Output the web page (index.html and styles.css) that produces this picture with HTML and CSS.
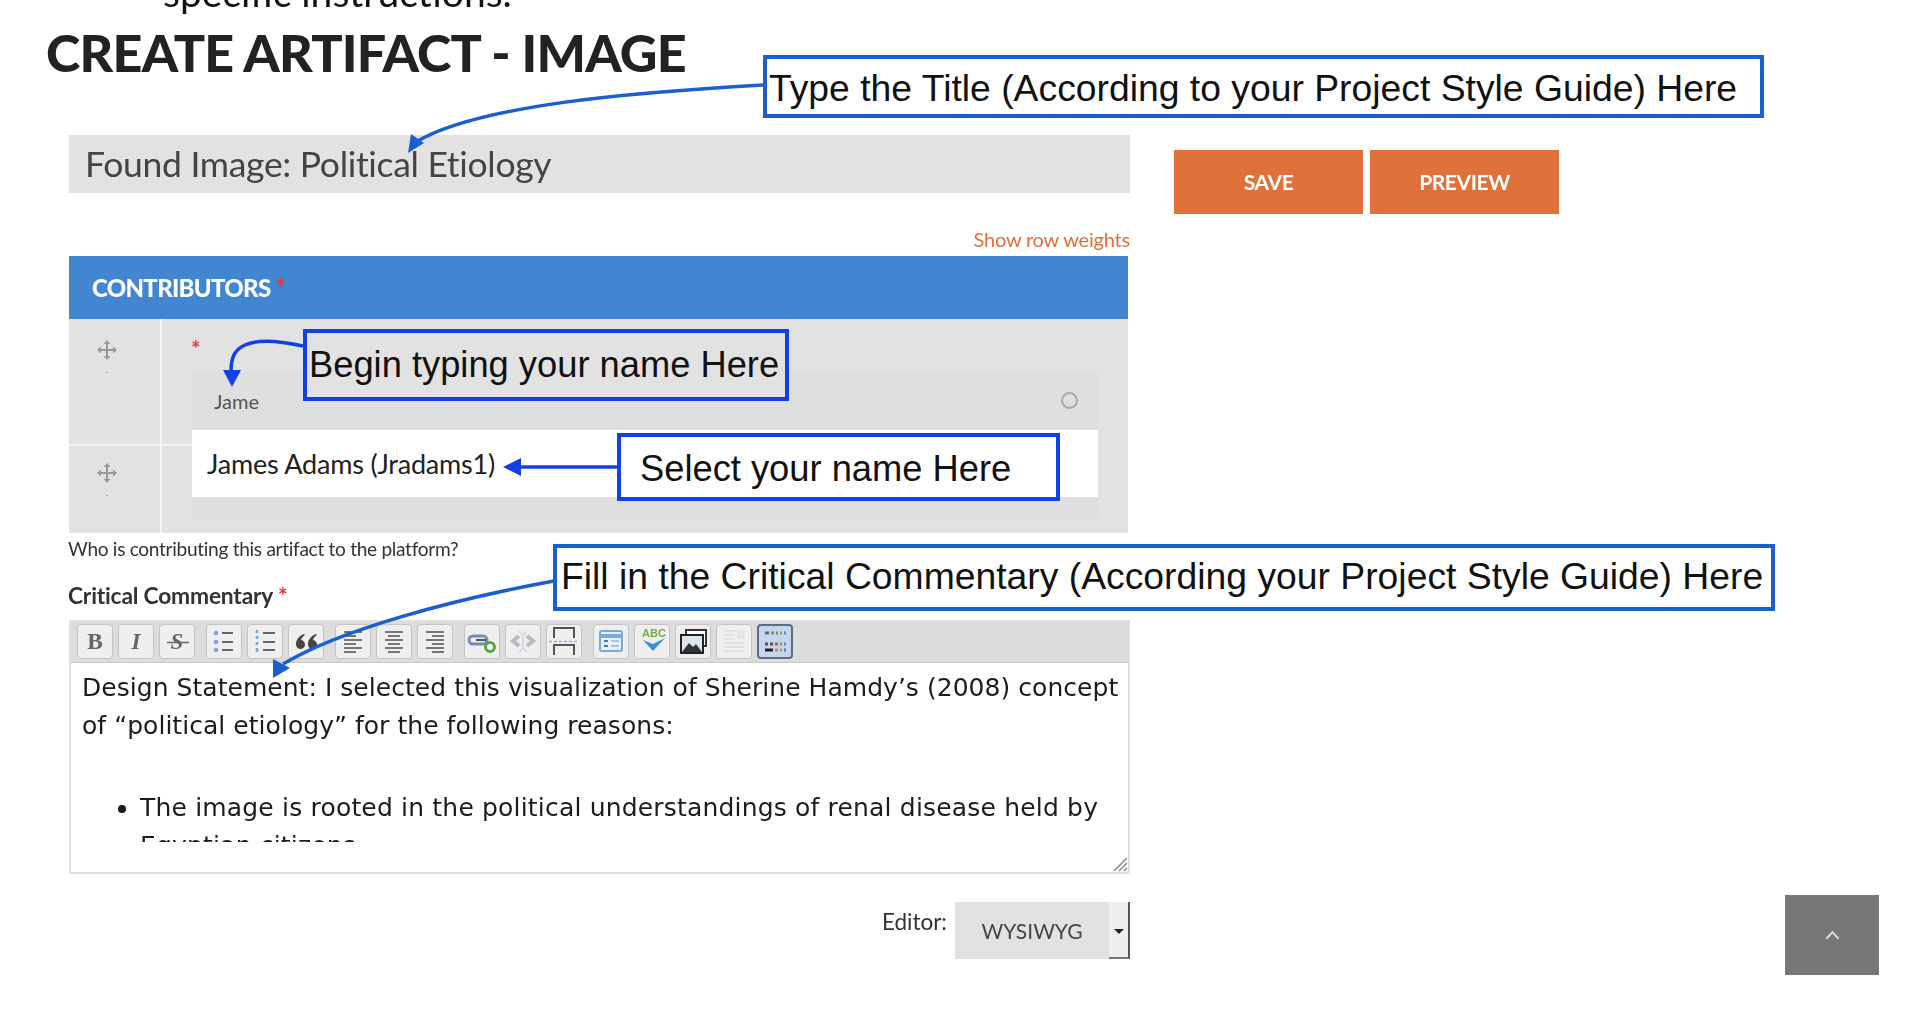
FILE: index.html
```
<!DOCTYPE html>
<html lang="en">
<head>
<meta charset="utf-8">
<title>Create Artifact - Image</title>
<link rel="stylesheet" href="styles.css">
</head>
<body>
<main class="page">
  <p class="clip-line">specific instructions.</p>
  <h1 class="page-title">CREATE ARTIFACT - IMAGE</h1>

  <div class="layout">
    <section class="form-col">
      <div class="title-field">Found Image: Political Etiology</div>
      <div class="weights"><a class="weights-link">Show row weights</a></div>

      <div class="panel-head">CONTRIBUTORS <span class="req">*</span></div>
      <div class="panel-body">
        <div class="drag-col">
          <div class="drag-cell">
            <svg class="move" viewBox="0 0 20 20"><use href="#i-move"/></svg>
            <i class="tick"></i>
          </div>
          <div class="drag-cell">
            <svg class="move" viewBox="0 0 20 20"><use href="#i-move"/></svg>
            <i class="tick"></i>
          </div>
        </div>
        <div class="field-col">
          <div class="row-line"></div>
          <span class="field-req">*</span>
          <div class="combo">
            <div class="combo-input"><span>Jame</span><i class="radio"></i></div>
            <div class="combo-option">James Adams (Jradams1)</div>
          </div>
        </div>
      </div>
      <p class="help">Who is contributing this artifact to the platform?</p>

      <h2 class="field-label">Critical Commentary <span class="req">*</span></h2>
      <div class="editor">
        <div class="toolbar">
          <div class="tool-group">
            <button class="tool"><span class="t-b">B</span></button>
            <button class="tool"><span class="t-i">I</span></button>
            <button class="tool"><span class="t-s">S</span><svg class="strike" viewBox="0 0 36 35"><path d="M7 17.500h22" stroke="#666" stroke-width="1.500"/></svg></button>
          </div>
          <div class="tool-group">
            <button class="tool"><svg viewBox="0 0 36 35"><g fill="#7ba7dc"><circle cx="10" cy="9" r="2.300"/><circle cx="10" cy="18" r="2.300"/><circle cx="10" cy="26" r="2.300"/></g><path d="M16 9h11M16 18h11M16 26h11" stroke="#666" stroke-width="2"/></svg></button>
            <button class="tool"><svg viewBox="0 0 36 35"><path d="M10 6v3M10 12v3M10 18v3M10 24v4" stroke="#7ba7dc" stroke-width="2.600"/><path d="M16 9h12M16 18h12M16 26h12" stroke="#666" stroke-width="2"/></svg></button>
            <button class="tool"><svg viewBox="0 0 36 35"><path d="M16 10c-5 2-8 6-8 10a4.500 4.500 0 1 0 5-4c.5-2 2-4 4-5zM28 10c-5 2-8 6-8 10a4.500 4.500 0 1 0 5-4c.5-2 2-4 4-5z" fill="#444"/></svg></button>
          </div>
          <div class="tool-group">
            <button class="tool"><svg viewBox="0 0 36 35"><path d="M9 8h18M9 12h12M9 16h18M9 20h12M9 24h18M9 28h12" stroke="#777" stroke-width="2"/></svg></button>
            <button class="tool"><svg viewBox="0 0 36 35"><path d="M9 8h18M12 12h12M9 16h18M12 20h12M9 24h18M12 28h12" stroke="#777" stroke-width="2"/></svg></button>
            <button class="tool"><svg viewBox="0 0 36 35"><path d="M9 8h18M15 12h12M9 16h18M15 20h12M9 24h18M15 28h12" stroke="#777" stroke-width="2"/></svg></button>
          </div>
          <div class="tool-group">
            <button class="tool"><svg viewBox="0 0 36 35"><path d="M9 12h10a4 4 0 0 1 0 8H9a4 4 0 0 1 0-8z" fill="none" stroke="#6d8fb8" stroke-width="3"/><path d="M12 16h10" stroke="#555" stroke-width="2"/><circle cx="26" cy="23" r="4.500" fill="#fff" stroke="#5ba33b" stroke-width="3"/></svg></button>
            <button class="tool"><svg viewBox="0 0 36 35"><path d="M14 12l-6 5 6 5M22 12l6 5-6 5" fill="none" stroke="#bbb" stroke-width="4"/><path d="M14 7l4 4 4-4M14 28l4-4 4 4M18 11v14" fill="none" stroke="#c9d8ea" stroke-width="1.500"/></svg></button>
            <button class="tool"><svg viewBox="0 0 36 35"><path d="M8 14V4h20v10M8 31V21h20v10" fill="none" stroke="#555" stroke-width="2"/><path d="M3 17.500h30" stroke="#8db0dc" stroke-width="1.500" stroke-dasharray="3 2"/></svg></button>
          </div>
          <div class="tool-group">
            <button class="tool"><svg viewBox="0 0 36 35"><rect x="7" y="7" width="22" height="20" rx="2" fill="#e8f0fa" stroke="#7ba7dc" stroke-width="2"/><path d="M7 12h22" stroke="#7ba7dc" stroke-width="4"/><path d="M11 17h4M11 22h4" stroke="#4a78b5" stroke-width="2"/><path d="M18 17h8M18 22h8" stroke="#a8c4e6" stroke-width="2"/></svg></button>
            <button class="tool"><span class="t-abc">ABC</span><svg class="check" viewBox="0 0 36 35"><path d="M8 15l10 11 12-13-12 6z" fill="#3f8fdc"/></svg></button>
            <button class="tool"><svg viewBox="0 0 36 35"><rect x="11" y="6" width="20" height="16" fill="#fff" stroke="#333" stroke-width="2"/><rect x="6" y="11" width="22" height="18" fill="#dde6ef" stroke="#222" stroke-width="2"/><path d="M7 28l7-9 4 4 3-3 6 8z" fill="#333"/></svg></button>
            <button class="tool"><svg viewBox="0 0 36 35"><path d="M8 7h11M8 11h11M8 15h11M8 19h20M8 23h20M8 27h20" stroke="#ddd" stroke-width="1.600"/><rect x="21" y="6" width="8" height="9" fill="#e4e4e4"/></svg></button>
            <button class="tool tool-on"><svg viewBox="0 0 36 35"><path d="M8 9h4" stroke="#666" stroke-width="3"/><path d="M14 9h3" stroke="#888" stroke-width="3"/><path d="M19 9h2" stroke="#6a9e4a" stroke-width="3"/><path d="M23 9h2" stroke="#d08a3a" stroke-width="3"/><path d="M27 9h2" stroke="#3f8fdc" stroke-width="3"/><path d="M8 20h3M13 20h3" stroke="#555" stroke-width="3"/><path d="M18 20h3" stroke="#c25a4a" stroke-width="3"/><path d="M23 20h2" stroke="#6a9e4a" stroke-width="3"/><path d="M27 20h2" stroke="#3f8fdc" stroke-width="3"/><path d="M8 26h8" stroke="#222" stroke-width="3"/><path d="M18 26h3M23 26h2" stroke="#d08a3a" stroke-width="3"/><path d="M27 26h2" stroke="#777" stroke-width="3"/></svg></button>
          </div>
        </div>
        <div class="editor-body">
          <div class="editor-clip">
            <p class="editor-p">Design Statement: I selected this visualization of Sherine Hamdy’s (2008) concept of “political etiology” for the following reasons:</p>
            <ul class="editor-list">
              <li>The image is rooted in the political understandings of renal disease held by Egyptian citizens</li>
            </ul>
          </div>
          <svg class="grip" viewBox="0 0 16 16"><path d="M2 15L15 2M7 15l8-8M12 15l3-3" stroke="#888" stroke-width="1.500"/></svg>
        </div>
      </div>

      <div class="editor-switch">
        <span class="switch-label">Editor:</span>
        <div class="select"><span class="select-value">WYSIWYG</span><span class="select-arrow"></span></div>
      </div>
    </section>

    <aside class="actions">
      <button class="btn">SAVE</button>
      <button class="btn">PREVIEW</button>
    </aside>
  </div>

  <svg class="arrows" viewBox="0 0 1908 1010" aria-hidden="true">
    <defs>
      <g id="i-move" fill="none" stroke="#999" stroke-width="2"><path d="M10 3v14M3 10h14"/><path d="M10 0l-3.500 4h7zM10 20l-3.500-4h7zM0 10l4-3.500v7zM20 10l-4-3.500v7z" fill="#999" stroke="none"/></g>
    </defs>
    <path class="a-dark" d="M763 85C640 92 480 104 416 142"/>
    <polygon class="f-dark" points="408,153 411,134 424,143"/>
    <path class="a-bright" d="M303 346C280 341 258 339 245 345C234 350 231 358 231 372"/>
    <polygon class="f-bright" points="232,387 223,370 241,370"/>
    <path class="a-bright" d="M617 467H518"/>
    <polygon class="f-bright" points="503,467 521,458 521,476"/>
    <path class="a-dark" d="M554 581C450 600 340 630 283 664"/>
    <polygon class="f-dark" points="273,678 273,659 290,668"/>
  </svg>

  <div class="callout c-title">Type the Title (According to your Project Style Guide) Here</div>
  <div class="callout c-bright c-type">Begin typing your name Here</div>
  <div class="callout c-bright c-select">Select your name Here</div>
  <div class="callout c-fill">Fill in the Critical Commentary (According your Project Style Guide) Here</div>

  <a class="to-top"><svg viewBox="0 0 16 10"><path d="M1.500 9l6.500-7 6.500 7" fill="none" stroke="#ddd" stroke-width="2"/></svg></a>
</main>
</body>
</html>
```
FILE: styles.css
```
* { box-sizing: border-box; }
html, body { margin: 0; height: 1010px; overflow: hidden; background: #fff; }
body { font-family: Lato, "Liberation Sans", sans-serif; color: #222; }
.page { position: relative; width: 1908px; height: 1010px; overflow: hidden; padding-left: 69px; filter: blur(.45px); }

.clip-line { margin: -32px 0 0 94px; font: 39px/48px Lato, sans-serif; color: #111; }
.page-title { margin: 5px 0 0 -23px; font: 900 52px/62px Lato, sans-serif; letter-spacing: -.75px; color: #222; }

.layout { display: grid; grid-template-columns: 1061px auto; column-gap: 44px; margin-top: 52px; }
.form-col { display: flex; flex-direction: column; align-items: stretch; }

.title-field { height: 58px; padding-left: 16px; background: #e2e2e2; font-size: 35.500px; line-height: 58px; color: #444; letter-spacing: -.3px; }
.weights { display: flex; justify-content: flex-end; height: 63px; padding-top: 34px; }
.weights-link { font-size: 20px; line-height: 24px; color: #df713a; letter-spacing: -.2px; }

.panel-head { width: 1059px; height: 63px; padding-left: 23px; background: #4285d1; color: #fff; font-size: 24px; font-weight: 900; line-height: 63px; letter-spacing: -.7px; }
.req { color: #ee3333; font-weight: 700; }
.panel-body { display: flex; width: 1059px; height: 214px; background: #e2e2e2; }
.drag-col { display: flex; flex-direction: column; width: 93px; border-right: 2px solid #f4f4f4; }
.drag-cell { display: flex; flex-direction: column; align-items: flex-start; height: 125px; padding: 21px 0 0 28px; }
.drag-cell + .drag-cell { height: auto; flex: 1; border-top: 2px solid #f4f4f4; padding-top: 17px; }
.move { width: 20px; height: 20px; }
.tick { width: 2px; height: 1px; margin: 12px 0 0 9px; background: #aaa; }
.field-col { position: relative; flex: 1; }
.row-line { position: absolute; left: 0; top: 125px; width: 30px; height: 2px; background: #f4f4f4; }
.field-req { position: absolute; left: 29px; top: 18px; color: #ee3333; font-size: 22px; line-height: 24px; font-weight: 700; }
.combo { position: absolute; left: 30px; top: 53px; width: 906px; height: 147px; background: #dfdfdf; }
.combo-input { display: flex; align-items: center; justify-content: space-between; height: 58px; padding: 0 20px 0 22px; font-size: 20px; color: #555; }
.radio { width: 17px; height: 17px; margin-top: -1px; border: 2px solid #aaa; border-radius: 50%; }
.combo-input span { margin-top: -1px; }
.combo-option { height: 67px; padding-left: 15px; background: #fff; font-size: 27px; line-height: 67px; color: #222; letter-spacing: -.2px; }

.help { margin: 4px 0 0 -1px; font-size: 19.100px; line-height: 24px; color: #333; letter-spacing: -.3px; }
.field-label { margin: 20px 0 0 -1px; font-size: 22.800px; line-height: 28px; font-weight: 700; color: #333; letter-spacing: -.2px; }

.editor { margin-top: 11px; border: 2px solid #e0e0e0; }
.toolbar { display: flex; gap: 11px; height: 41px; padding: 2px 6px 0; background: #dcdcdc; border-bottom: 1px solid #c9c9c9; }
.tool-group { display: flex; gap: 5px; }
.tool { position: relative; display: flex; align-items: center; justify-content: center; width: 36px; height: 35px; padding: 0; background: #efefef; border: 1px solid #c4c4c4; border-radius: 4px; }
.tool svg { width: 36px; height: 35px; flex: none; }
.tool-on { background: #c5d6ee; border: 2px solid #5f6c80; }
.t-b { font: 700 23px "Liberation Serif", serif; color: #666; }
.t-i { font: italic 700 23px "Liberation Serif", serif; color: #666; }
.t-s { font: italic 700 23px "Liberation Serif", serif; color: #666; }
.t-abc { position: absolute; left: 7px; top: 2px; font: 700 11px "Liberation Sans", sans-serif; color: #6fae4c; }
.check, .strike { position: absolute; left: 0; top: 0; }

.editor-body { position: relative; height: 209px; padding: 6px 0 0 11px; background: #fff; }
.editor-clip { height: 173px; overflow: hidden; font-family: "DejaVu Sans", sans-serif; font-size: 25px; line-height: 38px; color: #1c1c1c; }
.editor-p { margin: 0; padding-right: 4px; letter-spacing: .04px; }
.editor-list { margin: 44px 0 0; padding: 0 4px 0 58px; letter-spacing: .18px; }
.grip { position: absolute; right: 0; bottom: 0; width: 16px; height: 16px; }

.editor-switch { display: flex; justify-content: flex-end; align-items: flex-start; gap: 8px; margin-top: 28px; }
.switch-label { font-size: 22.500px; line-height: 28px; color: #333; margin-top: 6px; }
.select { display: flex; width: 175px; height: 57px; background: #e2e2e2; }
.select-value { flex: 1; text-align: center; font-size: 21px; line-height: 57px; color: #444; }
.select-arrow { position: relative; width: 21px; background: #efefef; border-right: 2px solid #555; border-bottom: 2px solid #777; }
.select-arrow::after { content: ""; position: absolute; left: 5px; top: 27px; border: 5px solid transparent; border-top-color: #222; border-bottom: 0; }

.actions { display: flex; gap: 7px; align-items: flex-start; padding-top: 15px; }
.btn { width: 189px; height: 64px; padding: 0 0 2px; border: 0; background: #df713a; color: #fff; font: 700 21px Lato, sans-serif; letter-spacing: -.4px; }

.arrows { position: absolute; left: 0; top: 0; width: 1908px; height: 1010px; pointer-events: none; }
.a-dark { fill: none; stroke: #1a5fd0; stroke-width: 3.500; }
.a-bright { fill: none; stroke: #1240e6; stroke-width: 3.500; }
.f-dark { fill: #1a5fd0; }
.f-bright { fill: #1240e6; }

.callout { position: absolute; display: flex; align-items: center; background: #fff; border: 4px solid #1a5fd0; font-family: "Liberation Sans", sans-serif; color: #111; white-space: nowrap; }
.c-bright { border-color: #1240e6; font-size: 36.300px; }
.c-title { left: 763px; top: 55px; width: 1001px; height: 63px; padding: 4px 0 0 2px; font-size: 37.300px; }
.c-type { left: 303px; top: 329px; width: 486px; height: 72px; padding-left: 2px; background: #e2e2e2; }
.c-select { left: 617px; top: 433px; width: 443px; height: 68px; padding: 4px 0 0 19px; }
.c-fill { left: 553px; top: 544px; width: 1222px; height: 67px; padding: 0 0 2px 4px; font-size: 37.300px; }

.to-top { position: absolute; left: 1785px; top: 895px; display: flex; align-items: center; justify-content: center; width: 94px; height: 80px; background: #777; }
.to-top svg { width: 15px; height: 10px; }
```
